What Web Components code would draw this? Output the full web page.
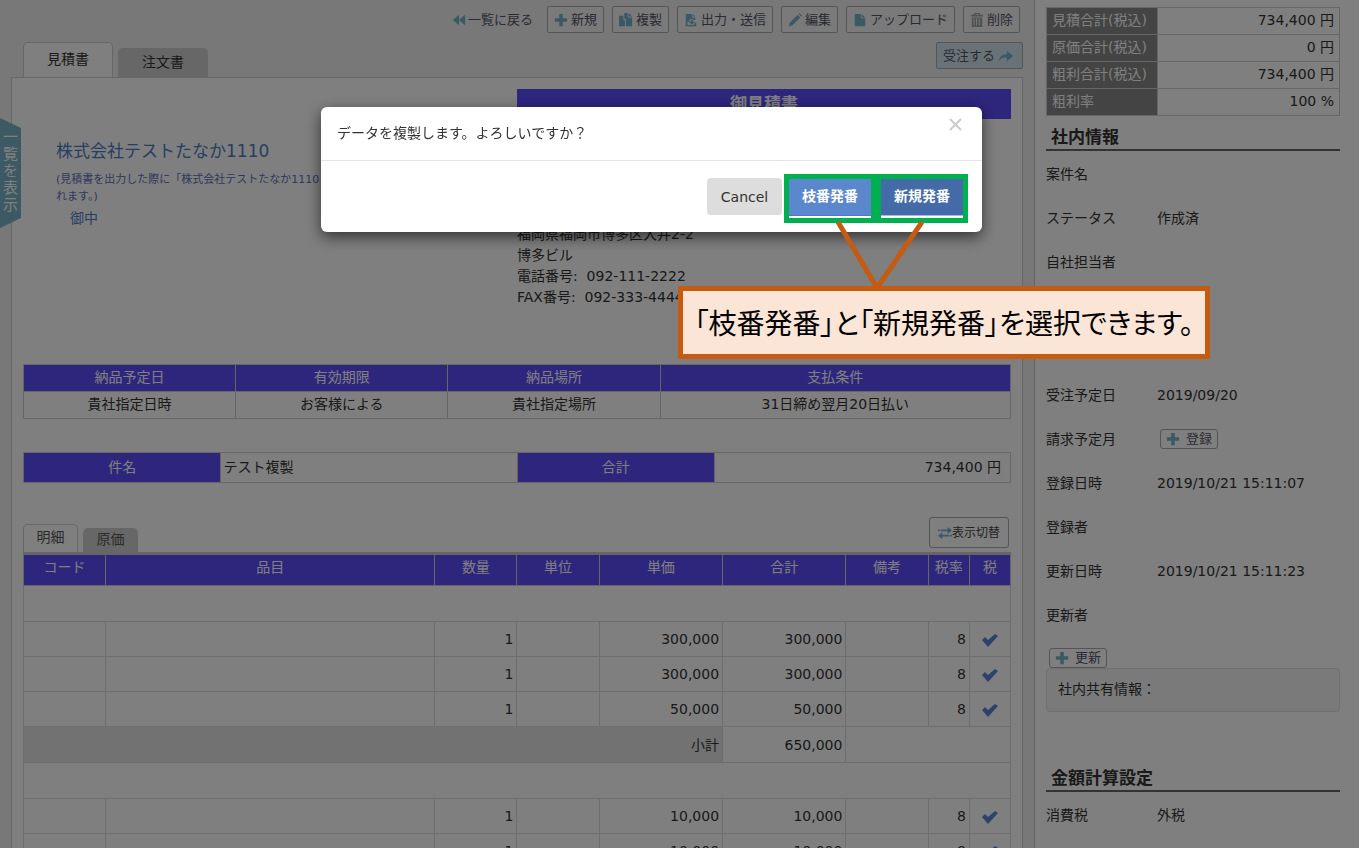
<!DOCTYPE html>
<html lang="ja">
<head>
<meta charset="utf-8">
<meta name="viewport" content="width=device-width, initial-scale=1">
<title>見積書</title>
<style>
  body {
    margin: 0;
    height: 100vh;
    overflow: hidden;
    background: #f0f0f0;
    color: #333;
    font: 14px/20px "DejaVu Sans", "Noto Sans CJK JP", sans-serif;
    --brand: #5d4bfb;
    --line: #ccc;
    --soft: #dcdcdc;
    --icon: #74b2ca;
    --link: #4f7cc4;
  }
</style>
</head>
<body>
<estimate-app></estimate-app>

<script>
const define = (name, html, setup) => customElements.define(name, class extends HTMLElement {
  constructor() {
    super();
    const template = document.createElement('template');
    template.innerHTML = html;
    this.attachShadow({ mode: 'open' }).append(template.content.cloneNode(true));
  }
  connectedCallback() { if (setup) setup(this, this.shadowRoot); }
});

const icons = {
  back: '<path d="M8 2v12L1 8zM15 2v12L8 8z"/>',
  plus: '<path d="M6 1h4v5h5v4h-5v5H6v-5H1V6h5z"/>',
  copy: '<path d="M0 3h5v4l2 2v6H0z"/><path d="M6 0h4v5h5v10H8V8L6 6zM11 0l4 4h-4z"/>',
  output: '<path fill-rule="evenodd" d="M2 1h7v4h4v3h-2.500V7h-4v3H4v4h6v1H2zM10 1l3 3h-3z"/><path d="M8 8h2v2h3l-4 3-4-3h3zM5 14l2-1 2 1.500 2-1.500 3 1v1H5zM12 11h2v3h-2z"/>',
  pencil: '<path d="M1 15l1-4L11 2l3 3-9 9zM12 1l1-1 3 3-1 1z"/>',
  file: '<path d="M2 1h7v5h5v9H2zM10 1l4 4h-4z"/>',
  trash: '<path fill-rule="evenodd" d="M5 0h6l1 2h3v2H1V2h3zm1 1v1h4V1zM2 5h12v11H2zm2 1v8h1V6zm3 0v8h1V6zm3 0v8h1V6z"/>',
  share: '<path d="M9 2l7 6-7 6v-4C5 9 2 10 0 14c0-5 4-8 9-8z"/>',
  swap: '<path d="M3 4h8V1l5 4-5 4V6H3zM0 4h2v2H0zM13 10H5V7l-5 4 5 4v-3h8zM14 10h2v2h-2z"/>',
  check: '<path d="M0 8l3-3 3 3 7-6 3 2-10 11z"/>'
};

define('ui-icon', `
  <style>
    :host { display: inline-block; flex: none; width: 14px; height: 14px; color: var(--icon); }
    svg { display: block; width: 100%; height: 100%; fill: currentColor; }
  </style>
  <svg viewBox="0 0 16 16" aria-hidden="true"></svg>`,
  (host, root) => { root.querySelector('svg').innerHTML = icons[host.getAttribute('name')]; });

define('tool-button', `
  <style>
    :host { display: block; }
    button { display: flex; align-items: center; gap: 3px; height: 27px; padding: 0 6px;
      border: 1px solid #aaa; border-radius: 2px; background: #f4f4f4; color: #555566;
      font: inherit; font-size: 13px; line-height: 20px; white-space: nowrap; }
    :host([tone="accent"]) button { gap: 4px; padding-right: 9px; background: #d3e7ee; flex-direction: row-reverse; justify-content: flex-end; }
    :host([size="small"]) button { height: 20px; gap: 6px; padding: 0 5px; background: #fff; border-radius: 3px; }
    :host([size="wide"]) button { height: 31px; gap: 0; padding: 0 8px; font-size: 12px; background: #fff; border-radius: 3px; color: #444; }
    ui-icon.gray { color: #a0a8a0; }
  </style>
  <button type="button"><ui-icon></ui-icon><span><slot></slot></span></button>`,
  (host, root) => {
    const icon = document.createElement('ui-icon');
    icon.setAttribute('name', host.getAttribute('icon'));
    if (host.getAttribute('icon') === 'trash') icon.className = 'gray';
    root.querySelector('ui-icon').replaceWith(icon);
  });

define('doc-tab', `
  <style>
    :host { display: block; }
    button { display: block; box-sizing: border-box; width: 90px; height: 29px; padding: 0 0 3px; border: 1px solid #cfcfcf;
      border-bottom: 0; border-radius: 5px 5px 0 0; background: #cfcfcf; color: #333;
      font: inherit; line-height: 20px; }
    :host([active]) button { height: 35px; background: #fff; }
    :host([compact]) button { width: 55px; height: 24px; color: #555; }
    :host([compact][active]) button { height: 28px; }
  </style>
  <button type="button"><slot></slot></button>`);

define('action-bar', `
  <style>
    :host { display: flex; justify-content: flex-end; align-items: center; gap: 8px; padding: 6px 3px 0 0; height: 27px; }
    a { display: flex; align-items: center; gap: 2px; margin-right: 6px; color: #555566; font-size: 13px; text-decoration: none; }
  </style>
  <a href="#"><ui-icon name="back"></ui-icon>一覧に戻る</a>
  <tool-button icon="plus">新規</tool-button>
  <tool-button icon="copy">複製</tool-button>
  <tool-button icon="output">出力・送信</tool-button>
  <tool-button icon="pencil">編集</tool-button>
  <tool-button icon="file">アップロード</tool-button>
  <tool-button icon="trash">削除</tool-button>`);

define('estimate-head', `
  <style>
    :host { display: grid; grid-template-columns: 1fr 1fr; height: 275px; }
    .client { padding: 50px 0 0 33px; color: var(--link); }
    .name { font-size: 17px; line-height: 24px; }
    .note { margin: 8px 0 3px; font-size: 11px; line-height: 17px; color: #626fb8; }
    .suffix { padding-left: 14px; }
    a { color: inherit; text-decoration: none; }
    h1 { margin: 0 0 105px; height: 30px; background: var(--brand); color: #fff; text-align: center;
      font-size: 17px; line-height: 30px; font-weight: bold; }
    address { font-style: normal; line-height: 21px; }
  </style>
  <div class="client">
    <div class="name"><a href="#">株式会社テストたなか1110</a></div>
    <div class="note">(見積書を出力した際に「株式会社テストたなか1110<br>れます。)</div>
    <div class="suffix">御中</div>
  </div>
  <div>
    <h1>御見積書</h1>
    <address>福岡県福岡市博多区大井2-2<br>博多ビル<br>電話番号:&nbsp; 092-111-2222<br>FAX番号:&nbsp; 092-333-4444</address>
  </div>`);

define('terms-table', `
  <style>
    :host { display: block; margin-bottom: 33px; }
    table { width: 100%; border-collapse: collapse; table-layout: fixed; text-align: center; }
    th, td { box-sizing: border-box; height: 27px; padding: 0 0 2px; border: 1px solid var(--line); line-height: 20px; }
    th { background: var(--brand); color: #fff; font-weight: normal; border-bottom: 0; }
    col { width: 21.5%; } col:last-child { width: 35.5%; }
  </style>
  <table>
    <colgroup><col><col><col><col></colgroup>
    <tr><th>納品予定日</th><th>有効期限</th><th>納品場所</th><th>支払条件</th></tr>
    <tr><td>貴社指定日時</td><td>お客様による</td><td>貴社指定場所</td><td>31日締め翌月20日払い</td></tr>
  </table>`);

define('subject-table', `
  <style>
    :host { display: block; margin-bottom: 34px; }
    table { width: 100%; border-collapse: collapse; table-layout: fixed; }
    th, td { box-sizing: border-box; height: 30px; padding: 0 2px 1px; border: 1px solid var(--line); }
    th { width: 20%; background: var(--brand); color: #fff; font-weight: normal; }
    .sum { text-align: right; padding-right: 9px; }
  </style>
  <table><tr><th scope="row">件名</th><td>テスト複製</td><th scope="row">合計</th><td class="sum">734,400 円</td></tr></table>`);

define('line-items', `
  <style>
    :host { display: block; }
    header { display: flex; align-items: flex-end; gap: 5px; }
    tool-button { margin: 0 2px 4px auto; }
    table { width: 100%; border-collapse: collapse; table-layout: fixed; border-top: 3px solid var(--line); border-left: 1px solid var(--line); }
    th, td { box-sizing: border-box; padding: 0 3px; border: 1px solid var(--soft); text-align: right; }
    th { height: 32px; padding: 0 0 6px; background: var(--brand); color: #fff; font-weight: normal; text-align: center;
      border-color: var(--line); border-top: 3px solid var(--line); }
    td { height: 35px; }
    .blank td, .subtotal td { height: 36px; }
    .subtotal .label { background: #e5e5e5; }
    td.tick { text-align: center; }
    ui-icon { width: 16px; height: 16px; color: #5684d6; vertical-align: middle; }
    .two { width: 8.33%; } .three { width: 12.5%; } .eight { width: 33.34%; } .one { width: 4.17%; }
  </style>
  <header>
    <doc-tab compact active>明細</doc-tab><doc-tab compact>原価</doc-tab>
    <tool-button icon="swap" size="wide">表示切替</tool-button>
  </header>
  <table>
    <colgroup><col class="two"><col class="eight"><col class="two"><col class="two"><col class="three"><col class="three"><col class="two"><col class="one"><col class="one"></colgroup>
    <thead><tr><th>コード</th><th>品目</th><th>数量</th><th>単位</th><th>単価</th><th>合計</th><th>備考</th><th>税率</th><th>税</th></tr></thead>
    <tbody></tbody>
  </table>`,
  (host, root) => {
    const item = price => `<tr><td></td><td></td><td>1</td><td></td><td>${price}</td><td>${price}</td><td></td><td>8</td><td class="tick"><ui-icon name="check"></ui-icon></td></tr>`;
    const blank = '<tr class="blank"><td colspan="9"></td></tr>';
    root.querySelector('tbody').innerHTML = blank + ['300,000', '300,000', '50,000'].map(item).join('')
      + '<tr class="subtotal"><td class="label" colspan="5">小計</td><td>650,000</td><td colspan="3"></td></tr>'
      + blank + ['10,000', '10,000'].map(item).join('');
  });

define('summary-table', `
  <style>
    :host { display: block; }
    table { width: 100%; border-collapse: collapse; }
    th, td { box-sizing: border-box; height: 27px; padding: 0 5px 2px; border: 1px solid var(--line); line-height: 20px; }
    th { width: 111px; padding-right: 0; background: #888; color: #fff; font-weight: normal; text-align: left; white-space: nowrap; }
    td { text-align: right; background: #fff; }
  </style>
  <table>
    <tr><th scope="row">見積合計(税込)</th><td>734,400 円</td></tr>
    <tr><th scope="row">原価合計(税込)</th><td>0 円</td></tr>
    <tr><th scope="row">粗利合計(税込)</th><td>734,400 円</td></tr>
    <tr><th scope="row">粗利率</th><td>100 %</td></tr>
  </table>`);

define('section-title', `
  <style>
    :host { display: block; }
    h2 { margin: 0; padding: 4px 5px 0; border-bottom: 2px solid #666; font-size: 17px; line-height: 23px; font-weight: bold; }
  </style>
  <h2><slot></slot></h2>`);

define('info-row', `
  <style>
    :host { display: grid; grid-template-columns: 111px 1fr; align-items: center; height: 44px; }
    :host([gap]) { height: 89px; }
  </style>
  <span><slot name="label"></slot></span><span><slot></slot></span>`);

define('info-panel', `
  <style>
    :host { display: block; box-sizing: border-box; padding: 7px 19px 0 11px; background: #fff; border-left: 1px solid var(--line); }
    section-title { margin-top: 6px; }
    .fields { padding-top: 1px; }
    .inset { display: flex; padding-left: 3px; }
    .memo { box-sizing: border-box; height: 44px; padding: 10px 11px; background: #f5f5f5; border: 1px solid #e0e0e0; border-radius: 4px; }
    .update { margin-top: 11px; }
    .money { margin-top: 51px; }
  </style>
  <summary-table></summary-table>
  <section-title>社内情報</section-title>
  <div class="fields">
    <info-row><span slot="label">案件名</span></info-row>
    <info-row><span slot="label">ステータス</span>作成済</info-row>
    <info-row><span slot="label">自社担当者</span></info-row>
    <info-row gap></info-row>
    <info-row><span slot="label">受注予定日</span>2019/09/20</info-row>
    <info-row><span slot="label">請求予定月</span><span class="inset"><tool-button icon="plus" size="small">登録</tool-button></span></info-row>
    <info-row><span slot="label">登録日時</span>2019/10/21 15:11:07</info-row>
    <info-row><span slot="label">登録者</span></info-row>
    <info-row><span slot="label">更新日時</span>2019/10/21 15:11:23</info-row>
    <info-row><span slot="label">更新者</span></info-row>
  </div>
  <div class="inset update"><tool-button icon="plus" size="small">更新</tool-button></div>
  <div class="memo">社内共有情報：</div>
  <section-title class="money">金額計算設定</section-title>
  <div class="fields">
    <info-row><span slot="label">消費税</span>外税</info-row>
  </div>`);

define('list-handle', `
  <style>
    :host { position: absolute; left: 0; top: 118px; }
    button { display: block; box-sizing: border-box; width: 21px; height: 110px; padding: 0 2px 4px; border: 0;
      background: #7ab2c9; color: #fff; font: inherit; font-size: 15px; line-height: 17px; word-break: break-all;
      clip-path: polygon(0 0, 100% 10px, 100% 100px, 0 100%); }
  </style>
  <button type="button">一覧を表示</button>`);

define('note-callout', `
  <style>
    :host { position: absolute; left: 357px; top: 179px; }
    p { box-sizing: border-box; width: 532px; height: 73px; margin: 0; border: 5px solid #c55a11; background: #fbe5d6; color: #000;
      font: 28px/63px "Noto Sans CJK JP", sans-serif; font-feature-settings: "palt"; text-align: center; white-space: nowrap; }
    svg { position: absolute; left: 150px; bottom: 68px; fill: none; stroke: #c55a11; stroke-width: 5; }
  </style>
  <p>「枝番発番」と「新規発番」を選択できます。</p>
  <svg width="104" height="70" aria-hidden="true"><path d="M10 1l39 66L94 1"/></svg>`);

define('confirm-dialog', `
  <style>
    :host { position: fixed; inset: 0; display: flex; justify-content: center; align-items: flex-start;
      padding: 107px 56px 0 0; background: rgba(0, 0, 0, .5); }
    dialog { position: relative; box-sizing: border-box; width: 661px; margin: 0; padding: 0; border: 0; border-radius: 6px;
      background: #fff; color: #333; box-shadow: 0 5px 15px rgba(0, 0, 0, .6); overflow: visible; }
    header { display: flex; justify-content: space-between; padding: 7px 17px 17px 16px; border-bottom: 1px solid #e5e5e5; }
    p { margin: 9px 0 0; }
    .close { width: 19px; height: 20px; padding: 0; border: 0; background: none; }
    .close svg { display: block; margin: 4px 3px; stroke: #ccc; stroke-width: 2; }
    footer { display: flex; justify-content: flex-end; padding: 13px 14px 9px; }
    footer button { height: 37px; border: 0; font: inherit; }
    .cancel { width: 75px; margin: 4px 2px 0 0; border-radius: 4px; background: #ddd; color: #333; }
    .mark { width: 82px; height: 39px; border: 5px solid #00b050; background: #fff; }
    .mark button { display: block; width: 100%; padding: 0 0 2px; background: #5b87cc; border-bottom: 1px solid #4f79c4; color: #fff; font-weight: bold; }
    .mark + .mark button { background: #456aa8; border-bottom-color: #9db9f0; }
  </style>
  <dialog open aria-label="データの複製">
    <header>
      <p>データを複製します。よろしいですか？</p>
      <button class="close" type="button" aria-label="閉じる"><svg width="13" height="13"><path d="M1 1l11 11M12 1L1 12"/></svg></button>
    </header>
    <footer>
      <button class="cancel" type="button">Cancel</button>
      <div class="mark"><button type="button">枝番発番</button></div>
      <div class="mark"><button type="button">新規発番</button></div>
    </footer>
    <note-callout></note-callout>
  </dialog>`);

define('estimate-app', `
  <style>
    :host { display: grid; grid-template-columns: minmax(0, 1fr) 325px; min-height: 100vh; position: relative; }
    main { padding: 0 11px; }
    .tabs { display: flex; align-items: flex-end; gap: 5px; padding: 9px 0 0 12px; }
    .order { margin: 0 0 8px auto; }
    .sheet { padding: 11px; border: 1px solid #cfcfcf; background: #fff; }
  </style>
  <main>
    <action-bar></action-bar>
    <div class="tabs">
      <doc-tab active>見積書</doc-tab><doc-tab>注文書</doc-tab>
      <tool-button class="order" icon="share" tone="accent">受注する</tool-button>
    </div>
    <div class="sheet">
      <estimate-head></estimate-head>
      <terms-table></terms-table>
      <subject-table></subject-table>
      <line-items></line-items>
    </div>
  </main>
  <info-panel></info-panel>
  <list-handle></list-handle>
  <confirm-dialog></confirm-dialog>`);
</script>
</body>
</html>
